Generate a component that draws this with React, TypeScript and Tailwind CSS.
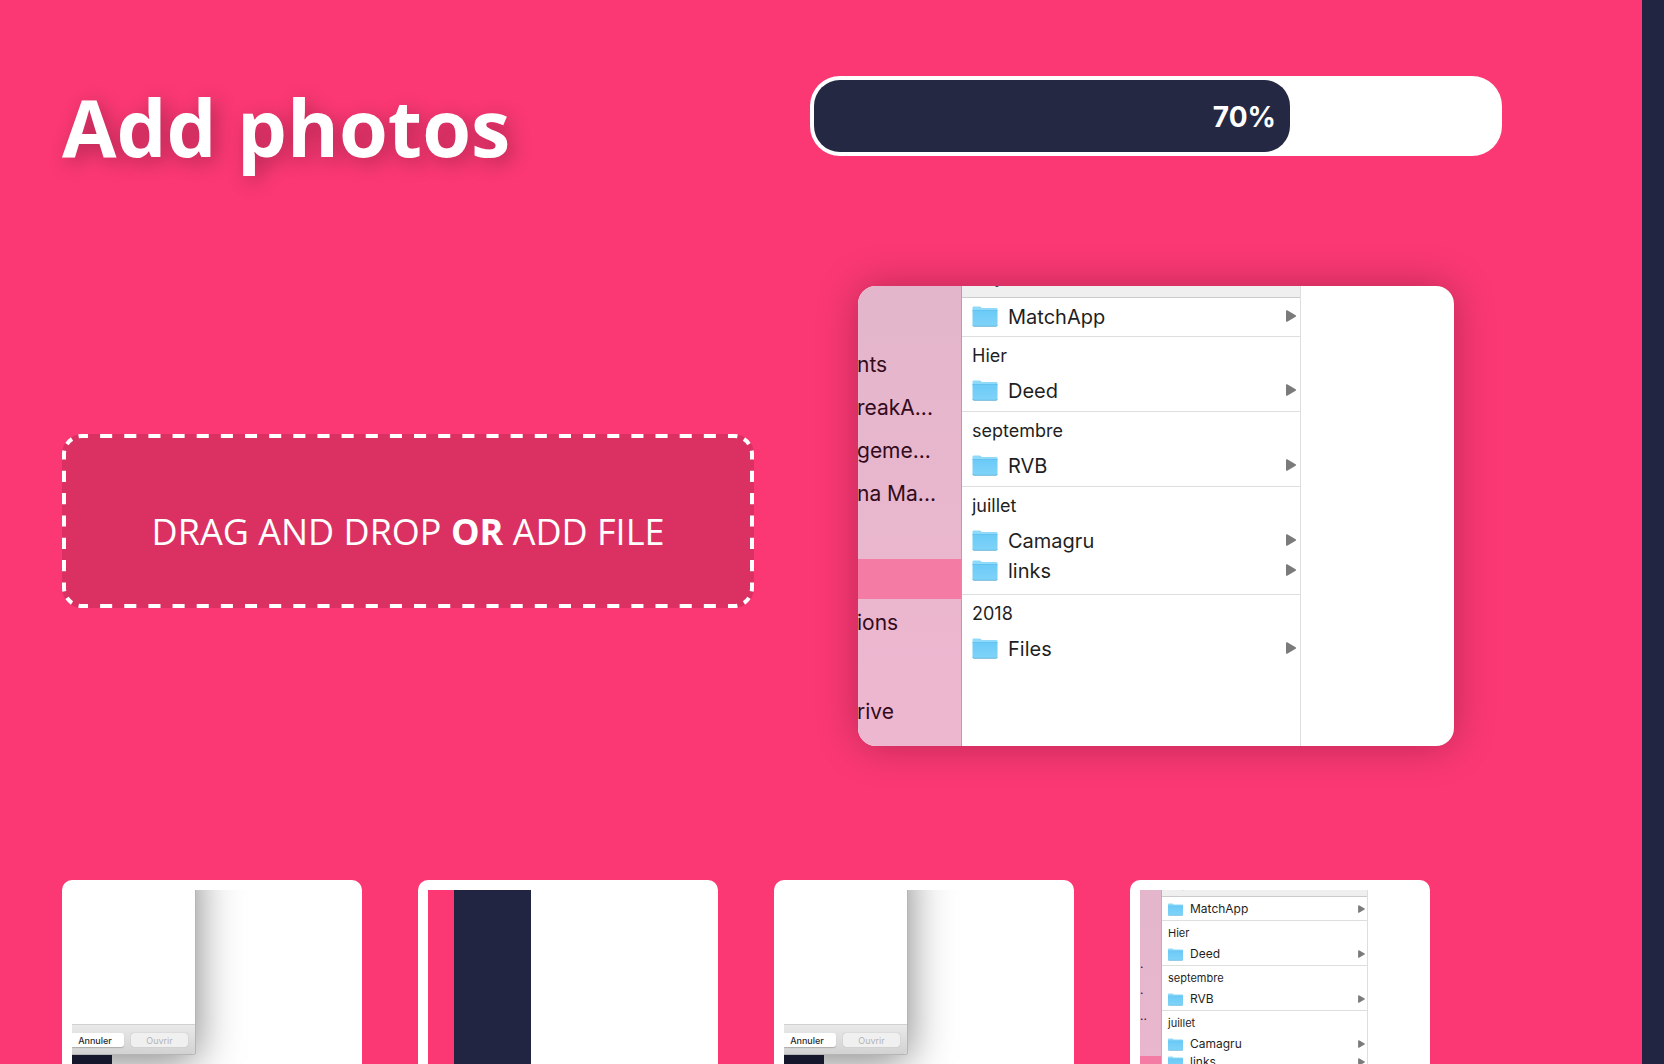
import React from "react";

type Size = "lg" | "sm";

const styles = {
  lg: {
    side: "w-[104px]",
    list: "w-[339px]",
    header: "h-[12px]",
    headerText: "mb-2",
    pad: "pl-[10px] pr-1",
    label: "h-[39px] pt-[7px] text-[18px] leading-6",
    row: "h-[30px] gap-[10px] text-[20px]",
    folder: "w-[26px] h-[21px] -translate-y-px",
    arrow: "mb-[2px] w-[10px] h-[12px]",
    first: "pt-1",
    group: "pb-[5px]",
    groupWide: "pb-[8px]",
  },
  sm: {
    side: "w-[22px]",
    list: "w-[206px]",
    header: "h-[7px]",
    headerText: "mb-1",
    pad: "pl-[6px] pr-[2px]",
    label: "h-6 pt-1 text-[11px] leading-4",
    row: "h-[18px] gap-[7px] text-[12px]",
    folder: "w-[15px] h-[13px]",
    arrow: "mb-px w-[7px] h-[8px]",
    first: "pt-[3px]",
    group: "pb-[2px]",
    groupWide: "pb-1",
  },
};

function Folder({ className, id }: { className: string; id: string }) {
  return (
    <svg viewBox="0 0 25 21" className={`shrink-0 ${className}`} aria-hidden="true">
      <defs>
        <linearGradient id={id} x1="0" y1="0" x2="0" y2="1">
          <stop offset="0" stopColor="#6bcaf7" />
          <stop offset="1" stopColor="#7fd3f8" />
        </linearGradient>
      </defs>
      <path d="M0 1.6Q0 .4 1.2.4H7q.8 0 1.3.5l.8.8q.4.4 1.1.4h13.500q1.300 0 1.300 1.300V5H0Z" fill="#8fd9fa" />
      <path d="M0 4.300H25V19q0 1.300-1.300 1.300H1.300Q0 20.300 0 19Z" fill={`url(#${id})`} />
      <path d="M0 4.500H25" stroke="#5bb9e6" strokeWidth=".6" />
      <path d="M.3 19.300Q.5 20.300 1.500 20.300H23.500Q24.500 20.300 24.700 19.300" fill="none" stroke="#55a9cf" strokeWidth=".8" />
    </svg>
  );
}

function Arrow({ className }: { className: string }) {
  return (
    <svg viewBox="0 0 10 12" className={`ml-auto shrink-0 ${className}`} aria-hidden="true">
      <path d="M.8 1 9.200 6 .8 11Z" fill="#7b7b7b" stroke="#7b7b7b" strokeWidth="1.600" strokeLinejoin="round" />
    </svg>
  );
}

const groups: { label?: string; items: string[] }[] = [
  { items: ["MatchApp"] },
  { label: "Hier", items: ["Deed"] },
  { label: "septembre", items: ["RVB"] },
  { label: "juillet", items: ["Camagru", "links"] },
  { label: "2018", items: ["Files"] },
];

function FileList({ size }: { size: Size }) {
  const s = styles[size];
  return (
    <div className={`shrink-0 border-r border-[#dedede] bg-white text-[#1f1f1f] ${s.list}`}>
      <div className={`flex items-end overflow-hidden border-b border-[#cbcbcb] bg-[#efefef] ${s.header} ${s.pad}`}>
        <span
          className={`font-semibold ${s.headerText} ${size === "lg" ? "text-[18px] leading-6" : "text-[11px] leading-4"}`}
        >
          Aujourd’hui
        </span>
      </div>
      {groups.map((g, i) => (
        <section
          key={i}
          className={`${i < groups.length - 1 ? "border-b border-[#dedede]" : ""} ${i === 0 ? s.first : ""} ${
            g.items.length > 1 ? s.groupWide : i === 0 && size === "lg" ? "pb-1" : s.group
          }`}
        >
          {g.label && <h3 className={`${s.pad} ${s.label}`}>{g.label}</h3>}
          {g.items.map((item) => (
            <div key={item} className={`flex items-center ${s.pad} ${s.row}`}>
              <Folder id={`folder-${size}-${item}`} className={s.folder} />
              <span>{item}</span>
              <Arrow className={s.arrow} />
            </div>
          ))}
        </section>
      ))}
    </div>
  );
}

function SideRow({ children }: { children?: React.ReactNode }) {
  return <div className="flex h-[43px] items-center overflow-hidden whitespace-nowrap">{children}</div>;
}

function LargePreview() {
  return (
    <div className="mx-12 flex h-[460px] overflow-hidden rounded-[18px] bg-white font-['Inter',sans-serif] shadow-[0_0_40px_rgba(0,0,0,0.27)]">
      <div
        className={`-ml-px box-content shrink-0 border-r border-[#c795ab] bg-linear-to-b from-[#e3b6cb] to-[#eeb7d0] pt-[57px] text-[21px] text-[#330b1c] ${styles.lg.side}`}
      >
        <SideRow>nts</SideRow>
        <SideRow>reakA...</SideRow>
        <SideRow>geme...</SideRow>
        <SideRow>na Ma...</SideRow>
        <div className="mt-[44px] h-10 bg-[#f47ba4]" />
        <div className="pt-[2px]">
          <SideRow>ions</SideRow>
        </div>
        <div className="pt-[46px]">
          <SideRow>rive</SideRow>
        </div>
      </div>
      <FileList size="lg" />
    </div>
  );
}

function Card({ children }: { children: React.ReactNode }) {
  return (
    <li className="h-[300px] w-[300px] rounded-[10px] bg-white p-[10px]">
      <div className="h-full overflow-hidden">{children}</div>
    </li>
  );
}

function DialogThumb() {
  return (
    <div className="h-full font-['Inter',sans-serif]">
      <div className="relative -mt-10 flex h-[205px] w-[124px] flex-col rounded-br-[3px] border-r border-b border-[#b5b5b5] bg-white shadow-[0_6px_44px_rgba(0,0,0,0.5)]">
        <div className="flex-1" />
        <div className="flex h-[30px] items-center gap-[7px] rounded-br-[3px] border-t border-[#cfd1cf] bg-linear-to-b from-[#e9e9e9] to-[#d2d2d2] pt-px text-[9px] leading-none">
          <button className="h-[14px] w-[52px] rounded-r-[3px] bg-white pr-[6px] text-center font-medium text-[#2b2b2b] shadow-[0_1px_1px_rgba(0,0,0,0.2)]">
            Annuler
          </button>
          <button
            disabled
            className="h-[14px] w-[57px] rounded-[3px] bg-[#f0f0f0] text-center text-[#b3b3b3] shadow-[0_0_1px_rgba(0,0,0,0.3)]"
          >
            Ouvrir
          </button>
        </div>
      </div>
      <div className="relative h-full w-10 bg-[#15182d]" />
    </div>
  );
}

function StripesThumb() {
  return (
    <div className="flex h-full">
      <div className="w-[26px] bg-[#fb3874]" />
      <div className="w-[77px] bg-[#222541]" />
    </div>
  );
}

function FinderThumb() {
  return (
    <div className="flex h-full font-['Inter',sans-serif]">
      <div
        className={`shrink-0 overflow-hidden border-r border-[#d3a3b8] bg-linear-to-b from-[#e3b6cb] to-[#edb7cf] pt-[61px] text-[12px] leading-[26px] text-[#330b1c] ${styles.sm.side}`}
      >
        <div>.</div>
        <div>.</div>
        <div>..</div>
        <div className="mt-[27px] h-6 bg-[#f47ba4]" />
      </div>
      <FileList size="sm" />
    </div>
  );
}

/* Dashed outline: every side and corner begins and ends on half a dash. */
function DashedOutline() {
  return (
    <svg
      viewBox="0 0 692 174"
      preserveAspectRatio="none"
      className="pointer-events-none absolute inset-0 h-full w-full"
      fill="none"
      stroke="#fff"
      strokeWidth="4"
      strokeDasharray="1 1"
      strokeDashoffset=".5"
      aria-hidden="true"
    >
      <path d="M20 2H672" pathLength={54} />
      <path d="M20 172H672" pathLength={54} />
      <path d="M2 20V154" pathLength={12} />
      <path d="M690 20V154" pathLength={12} />
      <path d="M2 20A18 18 0 0 1 20 2" pathLength={4} />
      <path d="M672 2A18 18 0 0 1 690 20" pathLength={4} />
      <path d="M690 154A18 18 0 0 1 672 172" pathLength={4} />
      <path d="M20 172A18 18 0 0 1 2 154" pathLength={4} />
    </svg>
  );
}

export default function App() {
  const progress = 70;
  return (
    <div className="flex h-screen overflow-hidden bg-[#222541] font-['Open_Sans',sans-serif]">
      <main className="min-w-0 flex-1 overflow-hidden bg-[#fb3874] pt-[76px] pr-[140px] pl-[62px]">
        <div className="grid grid-cols-2 items-start gap-14">
          <h1 className="mt-[11px] text-[79px] leading-[80px] font-bold text-white [text-shadow:5px_5px_20px_rgba(0,0,0,0.3)]">
            Add photos
          </h1>
          <div
            role="progressbar"
            aria-label="Upload progress"
            aria-valuenow={progress}
            aria-valuemin={0}
            aria-valuemax={100}
            className="h-20 rounded-[30px] bg-white py-1 pr-2 pl-1"
          >
            <div
              className="flex h-full items-center justify-end rounded-[26px] bg-[#242843] pt-[2px] pr-[14px] font-['Inter',sans-serif] text-[28px] font-bold text-white"
              style={{ width: `${progress}%` }}
            >
              {progress}%
            </div>
          </div>
        </div>

        <div className="mt-[119px] grid grid-cols-2 items-center gap-14">
          <label className="relative mt-[10px] flex h-[174px] cursor-pointer items-center justify-center rounded-[20px] bg-[#db3062] pt-[22px] text-[36px] text-white">
            <input type="file" accept="image/*" multiple className="sr-only" />
            <DashedOutline />
            <span className="whitespace-nowrap">
              DRAG AND DROP <strong className="font-bold">OR</strong> ADD FILE
            </span>
          </label>
          <LargePreview />
        </div>

        <ul className="mt-[134px] flex gap-14">
          <Card>
            <DialogThumb />
          </Card>
          <Card>
            <StripesThumb />
          </Card>
          <Card>
            <DialogThumb />
          </Card>
          <Card>
            <FinderThumb />
          </Card>
        </ul>
      </main>
      <aside className="w-[22px] shrink-0 bg-[#222541]" />
    </div>
  );
}
